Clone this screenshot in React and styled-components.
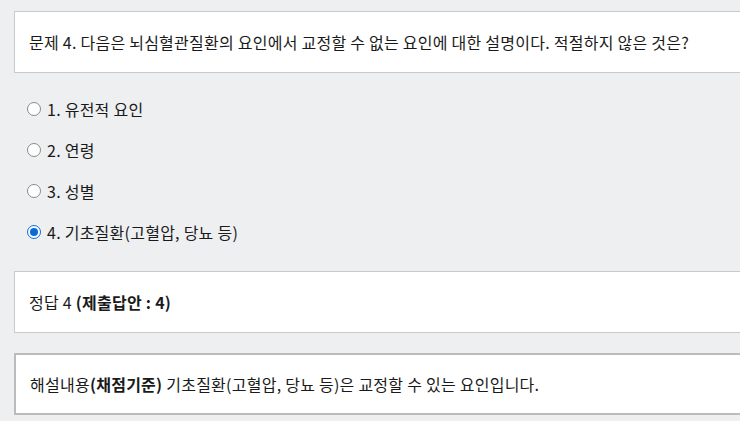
import React from 'react';
import styled, { createGlobalStyle } from 'styled-components';

const GlobalStyle = createGlobalStyle`
  html, body {
    margin: 0;
    padding: 0;
    background: #eeeff1;
  }
  body {
    font-family: 'Noto Sans CJK KR', 'Noto Sans', sans-serif;
    color: #1a1a1a;
    overflow: hidden;
  }
`;

const options = [
  { id: 1, label: '1. 유전적 요인' },
  { id: 2, label: '2. 연령' },
  { id: 3, label: '3. 성별' },
  { id: 4, label: '4. 기초질환(고혈압, 당뇨 등)' },
];

const App = () => {
  const selected = 4;

  return (
    <>
      <GlobalStyle />
      <Page>
        <Card>
          <CardText>
            문제 4. 다음은 뇌심혈관질환의 요인에서 교정할 수 없는 요인에 대한 설명이다. 적절하지 않은 것은?
          </CardText>
        </Card>
        <OptionList>
          {options.map((opt) => (
            <Option key={opt.id}>
              <Radio checked={opt.id === selected} />
              <OptionLabel>{opt.label}</OptionLabel>
            </Option>
          ))}
        </OptionList>
        <Card>
          <CardText>
            정답 4 <Strong>(제출답안 : 4)</Strong>
          </CardText>
        </Card>
        <Card $thick>
          <CardText>
            해설내용<Strong>(채점기준)</Strong> 기초질환(고혈압, 당뇨 등)은 교정할 수 있는 요인입니다.
          </CardText>
        </Card>
      </Page>
    </>
  );
};

const Page = styled.div`
  display: flex;
  flex-direction: column;
  padding: 11px 0 0 14px;
  width: 760px;
  box-sizing: border-box;
`;

const Card = styled.div`
  background: #fff;
  border: ${(p) => (p.$thick ? '2px' : '1px')} solid ${(p) => (p.$thick ? '#bcbcbc' : '#c9c9c9')};
  height: 62px;
  box-sizing: border-box;
  display: flex;
  align-items: center;
  padding: 0 14px;
  margin-bottom: 20px;

  &:last-child {
    margin-bottom: 0;
  }
`;

const CardText = styled.div`
  font-size: 16px;
  letter-spacing: 0.25px;
  line-height: 1;
  color: #1a1a1a;
`;

const Strong = styled.span`
  font-weight: 600;
`;

const OptionList = styled.div`
  display: flex;
  flex-direction: column;
  padding: 5px 0 29px 13px;
  gap: 20px;
`;

const Option = styled.label`
  display: flex;
  align-items: center;
  height: 21px;
  gap: 6px;
`;

const Radio = styled.span`
  width: 14px;
  height: 14px;
  border-radius: 50%;
  box-sizing: border-box;
  border: 1px solid ${(p) => (p.checked ? '#0b6ad8' : '#8a8a8a')};
  background: #fff;
  position: relative;
  flex-shrink: 0;

  &::after {
    content: '';
    display: ${(p) => (p.checked ? 'block' : 'none')};
    position: absolute;
    left: 2px;
    top: 2px;
    width: 8px;
    height: 8px;
    border-radius: 50%;
    background: #0b6ad8;
  }
`;

const OptionLabel = styled.span`
  font-size: 16px;
  letter-spacing: 0.25px;
  color: #1a1a1a;
`;

export default App;
